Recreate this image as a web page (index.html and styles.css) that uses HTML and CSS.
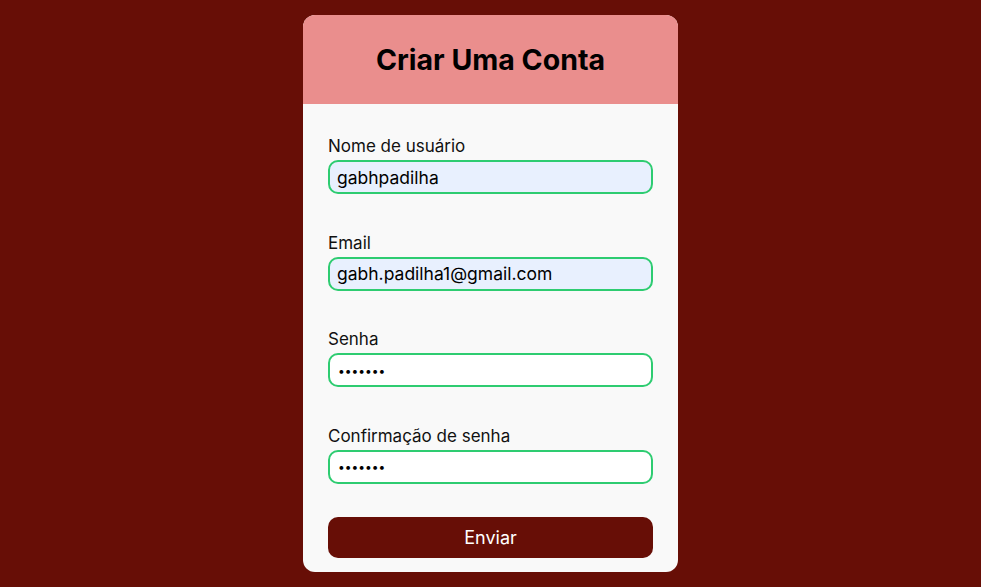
FILE: index.html
```html
<!DOCTYPE html>
<html lang="pt-BR">
<head>
<meta charset="utf-8">
<title>Criar Uma Conta</title>
<link rel="stylesheet" href="styles.css">
</head>
<body>
<main class="page">
  <section class="card">
    <header class="card-header">
      <h1 class="title">Criar Uma Conta</h1>
    </header>
    <form class="form">
      <div class="fields">
        <div class="field">
          <label class="label" for="user">Nome de usuário</label>
          <input class="input input-filled" id="user" type="text" value="gabhpadilha">
        </div>
        <div class="field">
          <label class="label" for="email">Email</label>
          <input class="input input-filled" id="email" type="email" value="gabh.padilha1@gmail.com">
        </div>
        <div class="field">
          <label class="label" for="pass">Senha</label>
          <input class="input input-password" id="pass" type="password" value="1234567">
        </div>
        <div class="field">
          <label class="label" for="pass2">Confirmação de senha</label>
          <input class="input input-password" id="pass2" type="password" value="1234567">
        </div>
      </div>
      <div class="actions">
        <button class="button" type="button">Enviar</button>
      </div>
    </form>
  </section>
</main>
</body>
</html>
```
FILE: styles.css
```css
* { box-sizing: border-box; }
html, body { margin: 0; padding: 0; }
body {
  background: #670e06;
  font-family: "Inter", "Noto Sans", sans-serif;
  color: #111;
}
.page {
  min-height: 587px;
  display: flex;
  align-items: center;
  justify-content: center;
}
.card {
  width: 375px;
  background: #f9f9f9;
  border-radius: 12px;
  overflow: hidden;
}
.card-header {
  height: 89px;
  background: #ea8e8d;
  display: flex;
  align-items: center;
  justify-content: center;
}
.title {
  margin: 0;
  font-size: 28.5px;
  font-weight: 700;
  color: #000;
}
.form {
  padding: 32px 25px 14px;
}
.fields {
  display: flex;
  flex-direction: column;
  gap: 38.5px;
}
.field {
  display: flex;
  flex-direction: column;
  gap: 3px;
}
.label {
  font-size: 17px;
  line-height: 21px;
  color: #111;
}
.input {
  height: 34px;
  width: 100%;
  border: 2px solid #2ecc71;
  border-radius: 10px;
  background: #fff;
  padding: 0 7px;
  font-family: inherit;
  font-size: 17.5px;
  color: #000;
  outline: none;
}
.input-filled { background: #e8f0fe; }
.input-password { font-size: 12px; padding: 0 8px; }
.actions { padding-top: 33px; }
.button {
  width: 100%;
  height: 41px;
  border: none;
  border-radius: 10px;
  background: #670e06;
  color: #fff;
  font-family: inherit;
  font-size: 18px;
}
```
